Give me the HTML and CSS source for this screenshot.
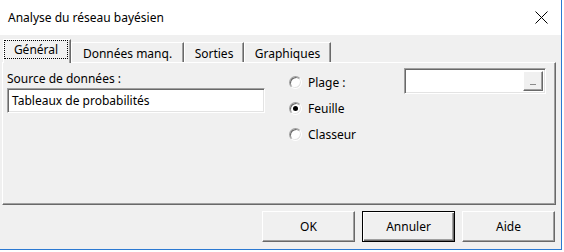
FILE: index.html
```html
<!DOCTYPE html>
<html>
<head>
    <meta charset='utf-8'>
    <title>Analyse du réseau bayésien</title>
    <link rel="stylesheet" href="styles.css">
</head>
<body>
    <div class="window">
        <div class="titlebar">
            <span class="title">Analyse du réseau bayésien</span>
            <svg class="close" width="13" height="13" viewBox="0 0 13 13">
                <path d="M0.5 0.5 L12.5 12.5 M12.5 0.5 L0.5 12.5" stroke="#000" stroke-width="1" fill="none"/>
            </svg>
        </div>
        <div class="tabs">
            <div class="tab active t-general"><span class="focus">Général</span></div>
            <div class="tab t-donnees">Données manq.</div>
            <div class="tab t-sorties">Sorties</div>
            <div class="tab t-graph">Graphiques</div>
        </div>
        <div class="panel">
            <div class="col-source">
                <div class="label">Source de données :</div>
                <div class="field">Tableaux de probabilités</div>
            </div>
            <div class="col-radios">
                <div class="radio-row"><span class="radio"></span>Plage :</div>
                <div class="radio-row"><span class="radio checked"></span>Feuille</div>
                <div class="radio-row"><span class="radio"></span>Classeur</div>
            </div>
            <div class="col-range">
                <div class="range">
                    <div class="pick"><span class="dash"></span></div>
                </div>
            </div>
        </div>
        <div class="buttons">
            <div class="btn">OK</div>
            <div class="btn default">Annuler</div>
            <div class="btn">Aide</div>
        </div>
    </div>
</body>
</html>
```

FILE: styles.css
```css
* {
    box-sizing: border-box;
}
body {
    margin: 0;
    background: #ffffff;
    font-family: "Noto Sans", "Liberation Sans", sans-serif;
    font-size: 12px;
    color: #000;
}
.window {
    width: 562px;
    height: 250px;
    display: flex;
    flex-direction: column;
    background: #f0f0f0;
    border-right: 1px solid #2b79d2;
    border-bottom: 1px solid #2b79d2;
}
.titlebar {
    height: 35px;
    flex: none;
    background: #fff;
    display: flex;
    align-items: center;
    justify-content: space-between;
    padding: 0 13px 0 8px;
}
.title {
    font-size: 12px;
}
.close {
    display: block;
}

/* tabs */
.tabs {
    flex: none;
    display: flex;
    align-items: flex-end;
    height: 23px;
    margin-top: 4px;
    padding-left: 3px;
}
.tab {
    height: 20px;
    display: flex;
    align-items: center;
    justify-content: center;
    border-top: 1px solid #fff;
    border-left: 1px solid #fff;
    border-right: 1px solid #696969;
    box-shadow: inset -1px 0 #a0a0a0;
    padding-top: 1px;
    white-space: nowrap;
}
.tab.active {
    height: 24px;
    margin-bottom: -1px;
    position: relative;
    z-index: 1;
    background: #f0f0f0;
    padding: 0 2px 4px 0;
    align-items: stretch;
}
.focus {
    flex: 1;
    display: flex;
    align-items: center;
    justify-content: center;
    outline: 1px dotted #000;
    outline-offset: -1px;
}
.t-general { width: 68px; }
.t-donnees { width: 113px; }
.t-sorties { width: 60px; }
.t-graph { width: 87px; }

/* panel */
.panel {
    flex: none;
    height: 143px;
    margin: 0 5px 0 2px;
    border-top: 1px solid #fff;
    border-left: 1px solid #fff;
    border-right: 1px solid #696969;
    border-bottom: 1px solid #696969;
    box-shadow: inset -1px -1px #a0a0a0;
    display: flex;
    padding: 5px 0 0 4px;
}
.col-source {
    width: 258px;
}
.label {
    line-height: 17px;
    padding-top: 2px;
}
.field {
    margin-top: 1px;
    height: 25px;
    background: #fff;
    border-top: 1px solid #a0a0a0;
    border-left: 1px solid #a0a0a0;
    border-right: 1px solid #fff;
    border-bottom: 1px solid #fff;
    box-shadow: inset 1px 1px #696969, inset -1px -1px #e3e3e3;
    padding-left: 4px;
    display: flex;
    align-items: center;
}
.col-radios {
    width: 115px;
    margin-left: 24px;
    padding-top: 1px;
}
.radio-row {
    height: 26px;
    display: flex;
    align-items: center;
}
.radio {
    width: 13px;
    height: 13px;
    border-radius: 50%;
    background: #fff;
    border: 1px solid;
    border-color: #a0a0a0 #fff #fff #a0a0a0;
    box-shadow: inset 1px 1px #696969, inset -1px -1px #e3e3e3;
    margin-right: 6px;
    display: flex;
    align-items: center;
    justify-content: center;
}
.radio.checked::after {
    content: "";
    width: 5px;
    height: 5px;
    border-radius: 50%;
    background: #000;
}
.col-range {
    width: 142px;
}
.range {
    height: 26px;
    background: #fff;
    border-top: 1px solid #a0a0a0;
    border-left: 1px solid #a0a0a0;
    border-right: 1px solid #fff;
    border-bottom: 1px solid #fff;
    box-shadow: inset 1px 1px #696969, inset -1px -1px #e3e3e3;
    display: flex;
    justify-content: flex-end;
    align-items: center;
    padding-right: 2px;
}
.pick {
    width: 20px;
    height: 20px;
    background: #f0f0f0;
    border-top: 1px solid #fff;
    border-left: 1px solid #fff;
    border-right: 1px solid #696969;
    border-bottom: 1px solid #696969;
    box-shadow: inset -1px -1px #a0a0a0;
    display: flex;
    justify-content: center;
    align-items: flex-end;
    padding-bottom: 5px;
}
.dash {
    width: 6px;
    height: 1px;
    background: #8a8a8a;
}

/* buttons */
.buttons {
    flex: none;
    display: flex;
    justify-content: flex-end;
    gap: 7px;
    margin-top: 6px;
    padding-right: 6px;
}
.btn {
    width: 93px;
    height: 31px;
    display: flex;
    align-items: center;
    justify-content: center;
    background: #f0f0f0;
    border-top: 1px solid #fff;
    border-left: 1px solid #fff;
    border-right: 1px solid #696969;
    border-bottom: 1px solid #696969;
    box-shadow: inset -1px -1px #a0a0a0;
}
.btn.default {
    border: 1px solid #000;
    box-shadow: inset 1px 1px #fff, inset -1px -1px #696969, inset -2px -2px #a0a0a0;
}
```
